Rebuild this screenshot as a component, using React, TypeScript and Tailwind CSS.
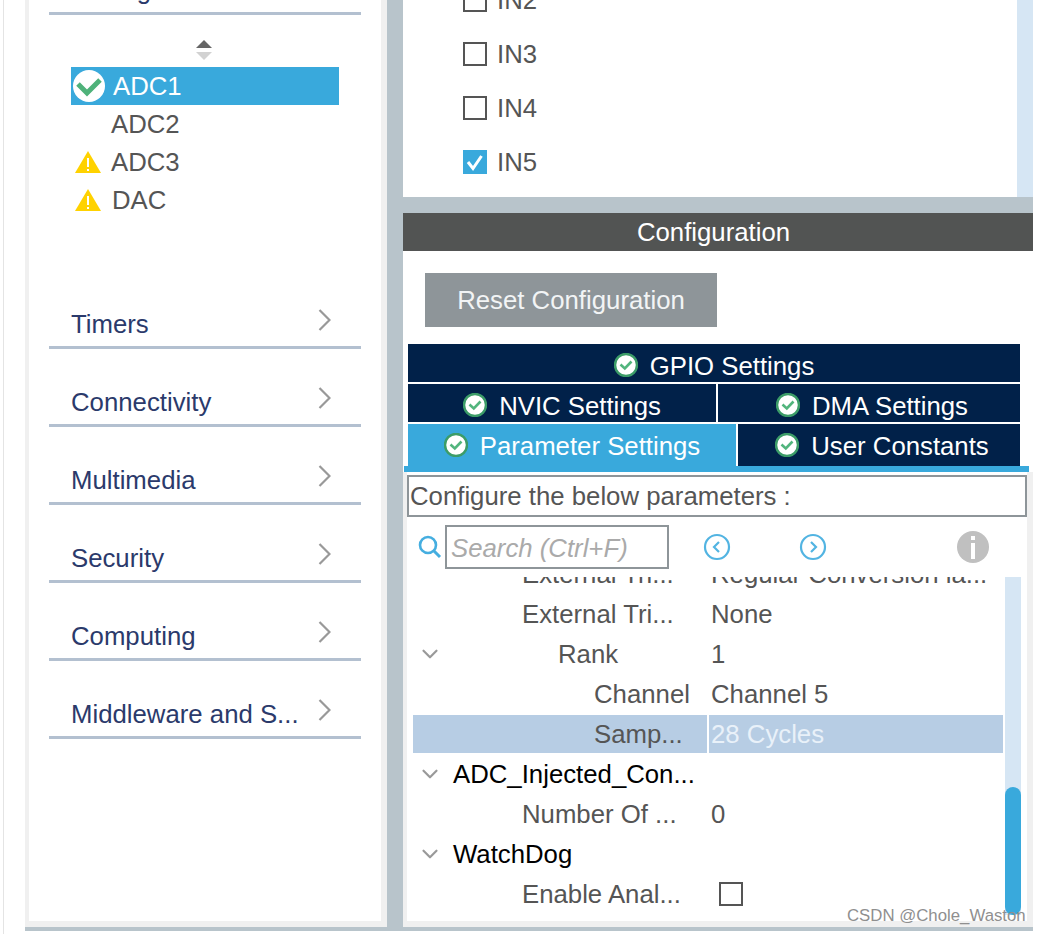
import { ChevronDown } from "lucide-react";

const navItems = ["Timers", "Connectivity", "Multimedia", "Security", "Computing", "Middleware and S..."];

function CheckDisc({ small }: { small?: boolean }) {
  if (small) {
    return (
      <svg width="24" height="24" viewBox="0 0 24 24" className="shrink-0">
        <circle cx="12" cy="12" r="11" fill="#fff" stroke="#3c9c68" strokeWidth="2.5" />
        <path d="M6.5 11.5 L10.8 15.5 L17.5 8.5" fill="none" stroke="#52b57d" strokeWidth="2.6" />
      </svg>
    );
  }
  return (
    <svg width="32" height="32" viewBox="0 0 32 32" className="shrink-0">
      <circle cx="16" cy="16" r="16" fill="#fff" />
      <path d="M5 14 L14 23 L27 10" fill="none" stroke="#4fb27a" strokeWidth="5" />
    </svg>
  );
}

function Warn() {
  return (
    <svg width="26" height="22" viewBox="0 0 26 22" className="shrink-0">
      <path d="M13 0 L26 22 L0 22 Z" fill="#ffd200" />
      <rect x="12" y="7" width="2" height="9" fill="#fff" />
      <rect x="12" y="18" width="2" height="2" fill="#fff" />
    </svg>
  );
}

function NavCircle({ dir }: { dir: "left" | "right" }) {
  return (
    <svg width="28" height="28" viewBox="0 0 28 28">
      <circle cx="14" cy="14" r="12" fill="none" stroke="#52b4e2" strokeWidth="2.2" />
      <path
        d={dir === "left" ? "M16 9 L11 14 L16 19" : "M12 9 L17 14 L12 19"}
        fill="none"
        stroke="#52b4e2"
        strokeWidth="2.2"
      />
    </svg>
  );
}

function Box({ checked }: { checked?: boolean }) {
  if (checked) {
    return (
      <div className="w-6 h-6 bg-[#39a9dc] flex items-center justify-center shrink-0">
        <svg width="24" height="24" viewBox="0 0 24 24">
          <path d="M5 12 L10 18.5 L18.5 6" fill="none" stroke="#fff" strokeWidth="3" />
        </svg>
      </div>
    );
  }
  return <div className="w-6 h-6 border-2 border-[#555] shrink-0" />;
}

function Tab({ label, className }: { label: string; className: string }) {
  return (
    <div className={`flex items-center justify-center gap-3 text-white ${className}`}>
      <CheckDisc small />
      <span className="pt-[1px]">{label}</span>
    </div>
  );
}

function TreeRow({
  label,
  value,
  indent,
  open,
  selected,
  dark,
  box,
}: {
  label: string;
  value?: string;
  indent: string;
  open?: boolean;
  selected?: boolean;
  dark?: boolean;
  box?: boolean;
}) {
  return (
    <div className="flex gap-[2px] h-[38px] shrink-0">
      <div className={`w-[294px] flex items-center relative ${indent} ${selected ? "bg-[#b7cde4]" : ""} ${dark ? "text-black" : "text-[#555]"}`}>
        {open && <ChevronDown className="absolute left-[4px] top-[6px] text-[#999]" size={26} strokeWidth={2} />}
        <span className="whitespace-nowrap">{label}</span>
      </div>
      <div className={`w-[294px] flex items-center pl-[2px] whitespace-nowrap ${selected ? "bg-[#b7cde4] text-[#e9f1f9]" : "text-[#555]"}`}>
        {box ? <div className="ml-[8px]"><Box /></div> : value}
      </div>
    </div>
  );
}

export default function App() {
  return (
    <div className="w-[1040px] h-[934px] overflow-hidden relative flex bg-white font-['Liberation_Sans',sans-serif] text-[25.75px] leading-[26px]">
      <div className="w-[25px] shrink-0">
        <div className="ml-[3px] w-px h-full bg-[#e4e4e4]" />
      </div>

      <div className="w-[1008px] h-[931px] bg-[#b8c4cb] flex items-start gap-4">
        {/* left categories panel */}
        <div className="w-[362px] h-[927px] border-l-4 border-r-[6px] border-b-[6px] border-[#f0f0f0] bg-white overflow-hidden shrink-0 px-5">
          <div className="h-[78px] -mt-[63px] flex items-end pb-[9px] border-b-[3px] border-[#b3c0d0] text-[#2b3a6b] pl-[22px]">
            Analog
          </div>
          <div className="h-[52px] pt-[25px] pr-[2px] flex flex-col items-center">
            <svg width="18" height="22" viewBox="0 0 18 22">
              <path d="M9 0 L17 8 L1 8 Z" fill="#666" />
              <path d="M1 12 L17 12 L9 20 Z" fill="#d2d2d2" />
            </svg>
          </div>
          <div className="ml-[22px] w-[268px]">
            <div className="h-[38px] bg-[#39a9dc] text-white flex items-center pl-[2px] gap-2">
              <CheckDisc />
              <span>ADC1</span>
            </div>
            <div className="h-[38px] flex items-center text-[#555] pl-[40px]">ADC2</div>
            <div className="h-[38px] flex items-center text-[#555] pl-[4px] gap-[10px]">
              <Warn />
              <span>ADC3</span>
            </div>
            <div className="h-[38px] flex items-center text-[#555] pl-[4px] gap-[11px]">
              <Warn />
              <span>DAC</span>
            </div>
          </div>
          <div className="mt-[52px]">
            {navItems.map((item) => (
              <div key={item} className="h-[78px] flex items-end justify-between pb-[9px] pl-[22px] pr-[30px] border-b-[3px] border-[#b3c0d0] text-[#2b3a6b]">
                <span className="whitespace-nowrap">{item}</span>
                <svg width="13" height="22" viewBox="0 0 13 22" className="text-[#999] mb-[6px]">
                  <path d="M1.5 1 L11.5 11 L1.5 21" fill="none" stroke="currentColor" strokeWidth="2.2" />
                </svg>
              </div>
            ))}
          </div>
        </div>

        {/* right column */}
        <div className="w-[630px] h-[927px] flex flex-col gap-4 shrink-0">
          <div className="h-[197px] flex shrink-0 overflow-hidden bg-white">
            <div className="w-[614px] -mt-[27px] pl-[60px] text-[#555]">
              {["IN2", "IN3", "IN4", "IN5"].map((name, i) => (
                <div key={name} className="h-[54px] flex items-center gap-[10px]">
                  <Box checked={i === 3} />
                  <span>{name}</span>
                </div>
              ))}
            </div>
            <div className="w-4 bg-[#d6e6f4]" />
          </div>

          <div className="h-[714px] flex flex-col bg-white">
            <div className="h-[38px] bg-[#525453] text-white flex items-center justify-center pr-[9px] shrink-0">Configuration</div>
            <div className="pt-[22px] pl-[22px] shrink-0">
              <div className="w-[292px] h-[54px] bg-[#8e9599] text-[#f2f4f5] flex items-center justify-center">Reset Configuration</div>
            </div>
            <div className="mt-[17px] ml-[5px] w-[612px] flex flex-col gap-[2px] shrink-0">
              <Tab label="GPIO Settings" className="h-[38px] bg-[#012149] pt-[4px]" />
              <div className="flex gap-[2px]">
                <Tab label="NVIC Settings" className="w-[308px] h-[38px] bg-[#012149] pt-[4px]" />
                <Tab label="DMA Settings" className="w-[302px] h-[38px] bg-[#012149] pt-[4px] pl-[6px]" />
              </div>
              <div className="flex gap-[2px]">
                <Tab label="Parameter Settings" className="w-[328px] h-[42px] bg-[#39a9dc]" />
                <Tab label="User Constants" className="w-[282px] h-[42px] bg-[#012149] pl-[6px]" />
              </div>
            </div>
            <div className="ml-[1px] w-[625px] h-[6px] bg-[#39a9dc] shrink-0" />

            <div className="flex-1 min-h-0 border-l-4 border-r-[6px] border-b-[6px] border-[#f0f0f0] bg-white pt-[3px] overflow-hidden">
              <div className="h-[42px] border-2 border-[#8e9599] flex items-center pl-[1px] text-[#555]">Configure the below parameters :</div>
              <div className="h-[44px] mt-2 flex items-center relative">
                <svg width="24" height="24" viewBox="0 0 24 24" className="ml-[11px]">
                  <circle cx="10" cy="10" r="8" fill="none" stroke="#45aee0" strokeWidth="2.6" />
                  <path d="M16 16 L22 22" stroke="#45aee0" strokeWidth="3" />
                </svg>
                <div className="ml-[3px] w-[224px] h-[44px] pt-[1px] border-2 border-[#8e9599] flex items-center pl-[4px] italic text-[#aaa]">Search (Ctrl+F)</div>
                <div className="ml-[34px]"><NavCircle dir="left" /></div>
                <div className="ml-[68px]"><NavCircle dir="right" /></div>
                <svg width="32" height="32" viewBox="0 0 32 32" className="ml-[130px]">
                  <circle cx="16" cy="16" r="16" fill="#c0c0c0" />
                  <rect x="14" y="5" width="4" height="4" fill="#fff" />
                  <rect x="14" y="12" width="4" height="16" fill="#fff" />
                </svg>
              </div>
              <div className="h-[343px] mt-2 flex items-start overflow-hidden">
                <div className="w-[598px] h-full pl-[6px] overflow-hidden">
                  <div className="-mt-[22px] flex flex-col gap-[2px]">
                    <TreeRow label="External Tri..." value="Regular Conversion la..." indent="pl-[109px]" />
                    <TreeRow label="External Tri..." value="None" indent="pl-[109px]" />
                    <TreeRow label="Rank" value="1" indent="pl-[145px]" open />
                    <TreeRow label="Channel" value="Channel 5" indent="pl-[181px]" />
                    <TreeRow label="Samp..." value="28 Cycles" indent="pl-[181px]" selected />
                    <TreeRow label="ADC_Injected_Con..." indent="pl-[40px]" open dark />
                    <TreeRow label="Number Of ..." value="0" indent="pl-[109px]" />
                    <TreeRow label="WatchDog" indent="pl-[40px]" open dark />
                    <TreeRow label="Enable Anal..." indent="pl-[109px]" box />
                  </div>
                </div>
                <div className="w-4 h-[338px] bg-[#d6e6f4] flex flex-col justify-end">
                  <div className="h-[128px] bg-[#39a9dc] rounded-lg" />
                </div>
              </div>
            </div>
          </div>
        </div>
      </div>

      <div className="absolute left-[847px] top-[907px] text-[16.8px] leading-[18px] text-[#8f8f8f] whitespace-nowrap">CSDN @Chole_Waston</div>
    </div>
  );
}
